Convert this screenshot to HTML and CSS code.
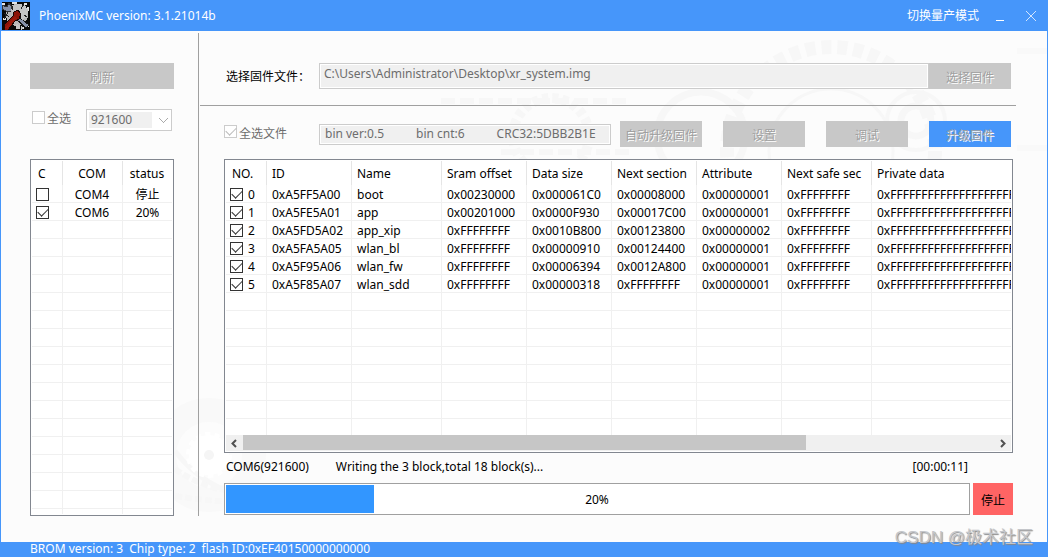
FILE: index.html
```html
<!DOCTYPE html>
<html lang="zh-CN">
<head>
<meta charset="utf-8">
<title>PhoenixMC</title>
<link rel="stylesheet" href="styles.css">
</head>
<body>
<div class="window">
  <header class="titlebar">
    <svg class="logo" viewBox="0 0 28 28" shape-rendering="crispEdges" aria-hidden="true">
      <rect width="28" height="28" fill="#080808"/>
      <circle cx="15" cy="13" r="11" fill="#b9b9b9"/>
      <path d="M0 1h3v2H0zM22 1h3v2h-3zM25 5h2v4h-2zM24 23h3v2h-3zM1 16h3v2H1zM20 25h2v2h-2zM10 0h5v2h-5z" fill="#e4e4e4"/>
      <path d="M0 3l5 2 2-4 3 4-1 4-3 1-6-3z" fill="#8791a8" stroke="#333"/>
      <path d="M16 14l11 9-3 3-10-9z" fill="#8791a8" stroke="#111"/>
      <path d="M11 4l5-2 7 1 3 5-1 7-5 3-3-6-5 1-3-5z" fill="#c6c6c6"/>
      <path d="M9 3l2 2-1 3M22 2l-3 5M25 15l-3-2M2 11l5 4M6 10l-4 7" stroke="#222" fill="none"/>
      <path d="M2 28v-5l9-9 1-4 4-2 3 4-2 5-4 2-7 9z" fill="#8b1307" stroke="#160504"/>
      <path d="M3 26l9-11 3 1-9 11z" fill="#9a180b"/>
      <path d="M14 22l4 1v4h-4zM19 24l2 2-2 2z" fill="#c5c5c5"/>
    </svg>
    <h1 class="app-title">PhoenixMC version: 3.1.21014b</h1>
    <button class="mode-switch" type="button">切换量产模式</button>
    <button class="window-control" type="button" aria-label="Minimize">
      <svg viewBox="0 0 12 12"><path d="M2 10.500h8" stroke="#fff"/></svg>
    </button>
    <button class="window-control" type="button" aria-label="Close">
      <svg viewBox="0 0 12 12"><path d="M1 1l10 10M11 1L1 11" stroke="#d3e5fd"/></svg>
    </button>
  </header>

  <main class="workspace">
    <svg class="backdrop" viewBox="0 0 1046 511" preserveAspectRatio="xMidYMid slice" aria-hidden="true">
      <g fill="none" stroke="#f7f7f7">
        <circle cx="830" cy="120" r="104" stroke-width="14" stroke-dasharray="10 6"/>
        <circle cx="830" cy="120" r="62" stroke-width="3"/>
        <circle cx="915" cy="90" r="29" stroke-width="4"/>
        <circle cx="915" cy="90" r="15" stroke-width="7"/>
        <circle cx="550" cy="105" r="38" stroke-width="10" stroke-dasharray="6 4"/>
        <circle cx="700" cy="105" r="44" stroke-width="7"/>
        <path d="M440 70h190M500 121h130" stroke-width="6" stroke-dasharray="14 5"/>
        <circle cx="208" cy="424" r="45" stroke-width="24" stroke="#f9f9f9"/>
        <path d="M1016 20h30M1016 117h30" stroke-width="6" stroke="#f9f9f9"/>
        <path d="M174 420q40 55 130 50" stroke-width="5"/>
        <path d="M174 438q40 28 90 22M174 465q50 8 90 5" stroke-width="6" stroke-dasharray="7 3"/>
      </g>
      <circle cx="208" cy="424" r="20" fill="#fff" stroke="#fff" stroke-width="6" stroke-dasharray="5 4"/>
      <circle cx="208" cy="424" r="5" fill="#f5f5f5"/>
    </svg>

    <section class="ports">
      <button class="btn btn-wide" type="button" disabled>刷新</button>
      <div class="port-options">
        <label class="check-label"><input class="check" type="checkbox" disabled><span>全选</span></label>
        <select class="baud" aria-label="Baud rate" disabled><option>921600</option></select>
      </div>
      <div class="grid-box">
        <div class="grid-view">
          <table class="grid port-grid" data-rows="19">
            <colgroup><col class="w-check"><col class="w-port"><col class="w-status"></colgroup>
            <thead><tr><th>C</th><th>COM</th><th>status</th></tr></thead>
            <tbody>
              <tr><td><input class="check" type="checkbox" aria-label="COM4"></td><td>COM4</td><td>停止</td></tr>
              <tr><td><input class="check" type="checkbox" aria-label="COM6" checked></td><td>COM6</td><td>20%</td></tr>
            </tbody>
          </table>
        </div>
      </div>
    </section>

    <section class="firmware">
      <div class="file-row">
        <label class="row-label" for="path">选择固件文件：</label>
        <input class="field path" id="path" type="text" value="C:\Users\Administrator\Desktop\xr_system.img" disabled>
        <button class="btn" type="button" disabled>选择固件</button>
      </div>
      <div class="details">
        <div class="action-row">
          <label class="check-label row-label"><input class="check" type="checkbox" checked disabled><span>全选文件</span></label>
          <div class="field summary"><span>bin ver:0.5</span><span>bin cnt:6</span><span>CRC32:5DBB2B1E</span></div>
          <div class="actions">
            <button class="btn" type="button" disabled>自动升级固件</button>
            <button class="btn" type="button" disabled>设置</button>
            <button class="btn" type="button" disabled>调试</button>
            <button class="btn btn-primary" type="button" disabled>升级固件</button>
          </div>
        </div>
        <div class="grid-box">
          <div class="grid-view">
            <table class="grid section-grid" data-rows="14">
              <colgroup><col class="w-no"><col class="w-field"><col class="w-name"><col class="w-field"><col class="w-field"><col class="w-field"><col class="w-field"><col class="w-name"><col></colgroup>
              <thead><tr><th>NO.</th><th>ID</th><th>Name</th><th>Sram offset</th><th>Data size</th><th>Next section</th><th>Attribute</th><th>Next safe sec</th><th>Private data</th></tr></thead>
              <tbody>
                <tr><td><label class="check-label"><input class="check" type="checkbox" checked>0</label></td><td>0xA5FF5A00</td><td>boot</td><td>0x00230000</td><td>0x000061C0</td><td>0x00008000</td><td>0x00000001</td><td>0xFFFFFFFF</td><td>0xFFFFFFFFFFFFFFFFFFFF</td></tr>
                <tr><td><label class="check-label"><input class="check" type="checkbox" checked>1</label></td><td>0xA5FE5A01</td><td>app</td><td>0x00201000</td><td>0x0000F930</td><td>0x00017C00</td><td>0x00000001</td><td>0xFFFFFFFF</td><td>0xFFFFFFFFFFFFFFFFFFFF</td></tr>
                <tr><td><label class="check-label"><input class="check" type="checkbox" checked>2</label></td><td>0xA5FD5A02</td><td>app_xip</td><td>0xFFFFFFFF</td><td>0x0010B800</td><td>0x00123800</td><td>0x00000002</td><td>0xFFFFFFFF</td><td>0xFFFFFFFFFFFFFFFFFFFF</td></tr>
                <tr><td><label class="check-label"><input class="check" type="checkbox" checked>3</label></td><td>0xA5FA5A05</td><td>wlan_bl</td><td>0xFFFFFFFF</td><td>0x00000910</td><td>0x00124400</td><td>0x00000001</td><td>0xFFFFFFFF</td><td>0xFFFFFFFFFFFFFFFFFFFF</td></tr>
                <tr><td><label class="check-label"><input class="check" type="checkbox" checked>4</label></td><td>0xA5F95A06</td><td>wlan_fw</td><td>0xFFFFFFFF</td><td>0x00006394</td><td>0x0012A800</td><td>0x00000001</td><td>0xFFFFFFFF</td><td>0xFFFFFFFFFFFFFFFFFFFF</td></tr>
                <tr><td><label class="check-label"><input class="check" type="checkbox" checked>5</label></td><td>0xA5F85A07</td><td>wlan_sdd</td><td>0xFFFFFFFF</td><td>0x00000318</td><td>0xFFFFFFFF</td><td>0x00000001</td><td>0xFFFFFFFF</td><td>0xFFFFFFFFFFFFFFFFFFFF</td></tr>
              </tbody>
            </table>
          </div>
          <div class="scrollbar">
            <button class="scroll-arrow" type="button" aria-label="Scroll left"><svg viewBox="0 0 17 15"><path d="M10 4L6.500 7.500 10 11" fill="none" stroke="#505050" stroke-width="2"/></svg></button>
            <div class="scroll-track"><div class="scroll-thumb"></div></div>
            <button class="scroll-arrow" type="button" aria-label="Scroll right"><svg viewBox="0 0 17 15"><path d="M7 4l3.500 3.500L7 11" fill="none" stroke="#505050" stroke-width="2"/></svg></button>
          </div>
        </div>
        <div class="status-row">
          <span>COM6(921600)</span>
          <span>Writing the 3 block,total 18 block(s)...</span>
          <time class="elapsed">[00:00:11]</time>
        </div>
        <div class="progress-row">
          <div class="meter">
            <progress class="bar" value="20" max="100" aria-label="Progress"></progress>
            <span class="percent">20%</span>
          </div>
          <button class="stop" type="button">停止</button>
        </div>
      </div>
    </section>
  </main>

  <footer class="statusbar"><span>BROM version: 3</span><span>Chip type: 2</span><span>flash ID:0xEF40150000000000</span></footer>
  <div class="watermark">CSDN @极术社区</div>
</div>
<script src="grid.js"></script>
</body>
</html>
```
FILE: styles.css
```css
* { box-sizing: border-box; }

body {
  margin: 0;
  font: 12px/18px "Noto Sans", "Noto Sans CJK SC", sans-serif;
  color: #000;
}

button, input, select { font: inherit; margin: 0; }
svg { display: block; }

.window {
  position: relative;
  display: flex;
  flex-direction: column;
  min-height: 100vh;
  background: #fcfcfc;
}

.titlebar {
  display: flex;
  align-items: center;
  height: 31px;
  padding: 0 9px 0 2px;
  background: #4696fa;
  color: #fff;
}

.logo { width: 28px; height: 28px; }

.app-title {
  flex: 1;
  margin: 0;
  padding: 1px 0 0 9px;
  font-size: 12px;
  font-weight: 400;
}

.mode-switch, .window-control {
  padding: 0;
  border: 0;
  background: none;
  color: #fff;
}

.mode-switch { margin-right: 13px; }
.window-control { width: 16px; padding: 2px; }
.window-control + .window-control { margin-left: 15px; }
.window-control svg { width: 12px; height: 12px; }

.workspace {
  position: relative;
  flex: 1;
  display: flex;
  border: solid #4696fa;
  border-width: 0 1px;
}

.backdrop {
  position: absolute;
  inset: 0;
  width: 100%;
  height: 100%;
}

.ports, .firmware {
  position: relative;
  display: flex;
  flex-direction: column;
}

.ports {
  width: 198px;
  padding: 32px 25px 26px 29px;
}

.ports::after {
  content: "";
  position: absolute;
  right: 0;
  top: 2px;
  bottom: 26px;
  width: 1px;
  background: #a0a0a0;
}

.firmware {
  flex: 1;
  min-width: 0;
  padding: 0 31px 27px 1px;
}

.btn {
  width: 82px;
  height: 26px;
  flex: none;
  padding: 3px 0 0;
  border: 0;
  background: #c8c8c8;
  color: #a0a0a0;
  text-shadow: 1px 1px #fff;
  white-space: nowrap;
}

.btn-wide { width: auto; }
.btn-primary { background: #4696fa; }

.port-options {
  display: flex;
  align-items: flex-start;
  justify-content: space-between;
  padding: 20px 2px 28px;
}

.check-label {
  display: flex;
  align-items: center;
  gap: 5px;
}

.port-options .check-label, .row-label.check-label {
  align-items: flex-start;
  color: #6d6d6d;
  gap: 2px;
}

.check {
  appearance: none;
  flex: none;
  display: block;
  width: 13px;
  height: 13px;
  border: 1px solid #333;
  background: #fff;
}

.port-options .check { margin-top: 2px; }
.port-options .check-label span { padding-top: 1px; }

.check:checked::before {
  content: "";
  display: block;
  width: 9px;
  height: 5px;
  margin: 2px 1px;
  border: solid #333;
  border-width: 0 0 1px 1px;
  transform: translateY(-1px) rotate(-45deg);
}

.check:disabled { border-color: #ccc; }
.check:checked:disabled::before { border-color: #bbb; }

.baud {
  appearance: none;
  width: 86px;
  height: 22px;
  padding: 0 4px;
  border: 1px solid #ccc;
  border-radius: 0;
  color: #6d6d6d;
  opacity: 1;
  background:
    linear-gradient(45deg, transparent 42%, #aaa 42% 58%, transparent 58%) 72px 8px / 5px 5px no-repeat,
    linear-gradient(-45deg, transparent 42%, #aaa 42% 58%, transparent 58%) 76px 8px / 5px 5px no-repeat,
    linear-gradient(#f0f0f0, #f0f0f0) 2px 2px / 63px 16px no-repeat,
    #fff;
}

.grid-box {
  flex: 1 1 0;
  min-height: 160px;
  display: flex;
  flex-direction: column;
  padding: 1px;
  border: 1px solid #828790;
  background: #fff;
}

.grid-view { flex: 1 1 0; overflow: hidden; }

.grid {
  table-layout: fixed;
  border-collapse: separate;
  border-spacing: 0;
  white-space: nowrap;
}

.port-grid { width: 141px; text-align: center; }
.section-grid { width: 100%; }
.w-check { width: 31px; }
.w-port { width: 60px; }
.w-status { width: 50px; }
.w-no { width: 41px; }
.w-field { width: 85px; }
.w-name { width: 90px; }

.grid th, .grid td { overflow: hidden; padding: 0 5px; }

.grid th {
  height: 24px;
  padding-top: 2px;
  border-right: 1px solid #e5e5e5;
  font-weight: 400;
}

.grid td {
  height: 18px;
  padding-top: 2px;
  line-height: 15px;
  border-right: 1px solid #f0f0f0;
  border-bottom: 1px solid #f0f0f0;
}

.section-grid th { text-align: left; }
.port-grid td:first-child, .port-grid th:first-child { text-align: left; }
.port-grid td:last-child, .section-grid td:last-child, .section-grid th:last-child { border-right: 0; }
.port-grid th, .port-grid td { padding-left: 3px; padding-right: 4px; }
.grid th:first-child { padding-left: 6px; }
.grid td:first-child { padding: 1px 0 0 4px; }

.scrollbar {
  display: flex;
  height: 16px;
  background: #f0f0f0;
}

.scroll-arrow {
  width: 17px;
  padding: 0;
  border: 0;
  background: none;
}

.scroll-arrow svg { width: 17px; height: 15px; }
.scroll-track { flex: 1; }
.scroll-thumb { width: 75%; height: 15px; background: #c6c6c6; }

.file-row {
  display: flex;
  padding: 32px 5px 16px 24px;
  border-bottom: 1px solid #a0a0a0;
}

.row-label { flex: none; width: 95px; }
.file-row .row-label { padding: 5px 0 0 2px; white-space: nowrap; }

.field {
  flex: 1;
  min-width: 0;
  border: 1px solid #ccc;
  outline: 1px solid #fff;
  outline-offset: -2px;
  background: #f0f0f0;
  color: #6d6d6d;
}

.path { height: 26px; padding: 0 4px 5px; }

.details {
  flex: 1;
  display: flex;
  flex-direction: column;
  padding: 0 3px 0 24px;
}

.action-row {
  display: flex;
  align-items: center;
  gap: 9px;
  padding: 15px 2px 12px 0;
}

.action-row .row-label { width: 86px; }

.summary {
  display: flex;
  gap: 32px;
  height: 21px;
  padding: 0 5px;
  white-space: nowrap;
}

.actions { display: flex; gap: 21px; }

.status-row {
  display: flex;
  gap: 27px;
  height: 30px;
  padding: 5px 45px 0 2px;
}

.elapsed { margin-left: auto; }

.progress-row { display: flex; gap: 3px; height: 32px; }

.meter { flex: 1; display: grid; }

.bar, .percent { grid-area: 1 / 1; }

.bar {
  appearance: none;
  width: 100%;
  height: 32px;
  padding: 1px;
  border: 1px solid #a0a0a0;
  background: #fff;
}

.bar::-webkit-progress-bar { background: #fff; }
.bar::-webkit-progress-value { background: #3296ff; }

.percent { place-self: center; padding-top: 2px; z-index: 1; }

.stop {
  width: 40px;
  padding: 3px 0 0;
  border: 0;
  background: #ff6464;
}

.statusbar {
  display: flex;
  gap: 6px;
  height: 15px;
  padding-left: 30px;
  line-height: 14px;
  background: #4696fa;
  color: #fff;
}

.watermark {
  position: absolute;
  right: 15px;
  bottom: 6px;
  font-family: "Liberation Sans", "Noto Sans CJK SC", sans-serif;
  font-size: 17px;
  line-height: 26px;
  color: #c4c6ca;
  text-shadow: 1px 1px 1px #888;
}
```
FILE: grid.js
```js
// Pad each grid with empty rows so that its lines run to the bottom of the box.
document.querySelectorAll("table[data-rows]").forEach((table) => {
  const body = table.tBodies[0];
  const columns = table.tHead.rows[0].cells.length;
  while (body.rows.length < Number(table.dataset.rows)) {
    const row = body.insertRow();
    for (let i = 0; i < columns; i++) row.insertCell();
  }
});
```
